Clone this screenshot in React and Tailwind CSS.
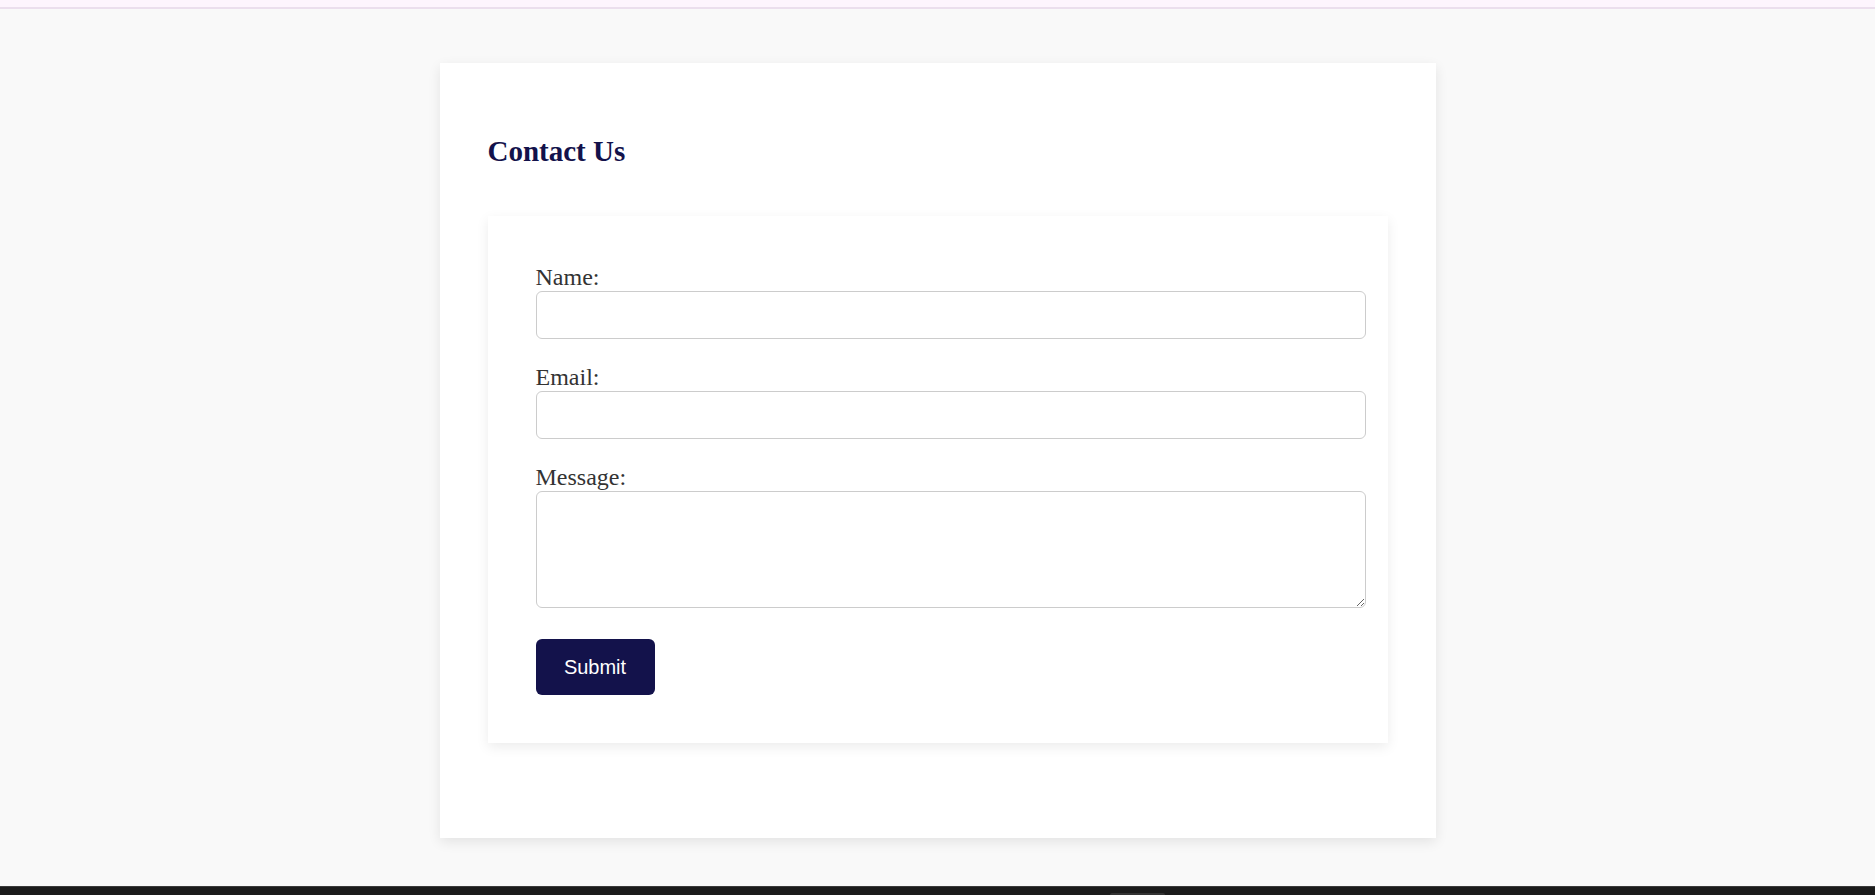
const Field = ({ label, children, last }) => (
  <div className={last ? 'mb-[31px]' : 'mb-[24px]'}>
    <label className="block text-[24px] leading-[28px] text-[#333333]">{label}</label>
    {children}
  </div>
);

const App = () => {
  const inputClass =
    'block w-[calc(100%+26px)] box-border border border-[#cccccc] rounded-[6px] bg-white px-[12px] outline-none';

  return (
    <div className="h-[895px] flex flex-col font-['Liberation_Serif',serif] bg-[#f9f9f9] overflow-hidden">
      {/* top strip */}
      <div className="h-[7px] bg-[#fdf5fd]"></div>
      <div className="h-[2px] bg-[#ebdfed]"></div>

      <main className="flex-1">
        <div className="mx-auto mt-[54px] w-[996px] bg-white px-[48px] pt-[72px] pb-[95px] shadow-[0_4px_12px_rgba(0,0,0,0.09)]">
          <h2 className="text-[29px] leading-[32px] font-bold text-[#13124b] mb-[49px]">Contact Us</h2>

          <form className="bg-white px-[48px] pt-[47px] pb-[48px] shadow-[0_4px_12px_rgba(0,0,0,0.08)]">
            <Field label="Name:">
              <input type="text" className={`${inputClass} h-[48px]`} />
            </Field>
            <Field label="Email:">
              <input type="email" className={`${inputClass} h-[48px]`} />
            </Field>
            <Field label="Message:" last>
              <textarea className={`${inputClass} h-[117px] py-[12px] resize`}></textarea>
            </Field>
            <button
              type="button"
              className="h-[56px] w-[119px] rounded-[6px] bg-[#13124b] text-white text-[20px] font-['Liberation_Sans',sans-serif] flex items-center justify-center"
            >
              Submit
            </button>
          </form>
        </div>
      </main>

      {/* bottom taskbar edge */}
      <div className="h-[9px] bg-[#1b1b1b] border-t border-[#3a3a3a]">
        <div className="ml-[1110px] mt-[6px] w-[55px] h-[2px] rounded-t-[3px] bg-[#333333]"></div>
      </div>
    </div>
  );
};

export default App;
